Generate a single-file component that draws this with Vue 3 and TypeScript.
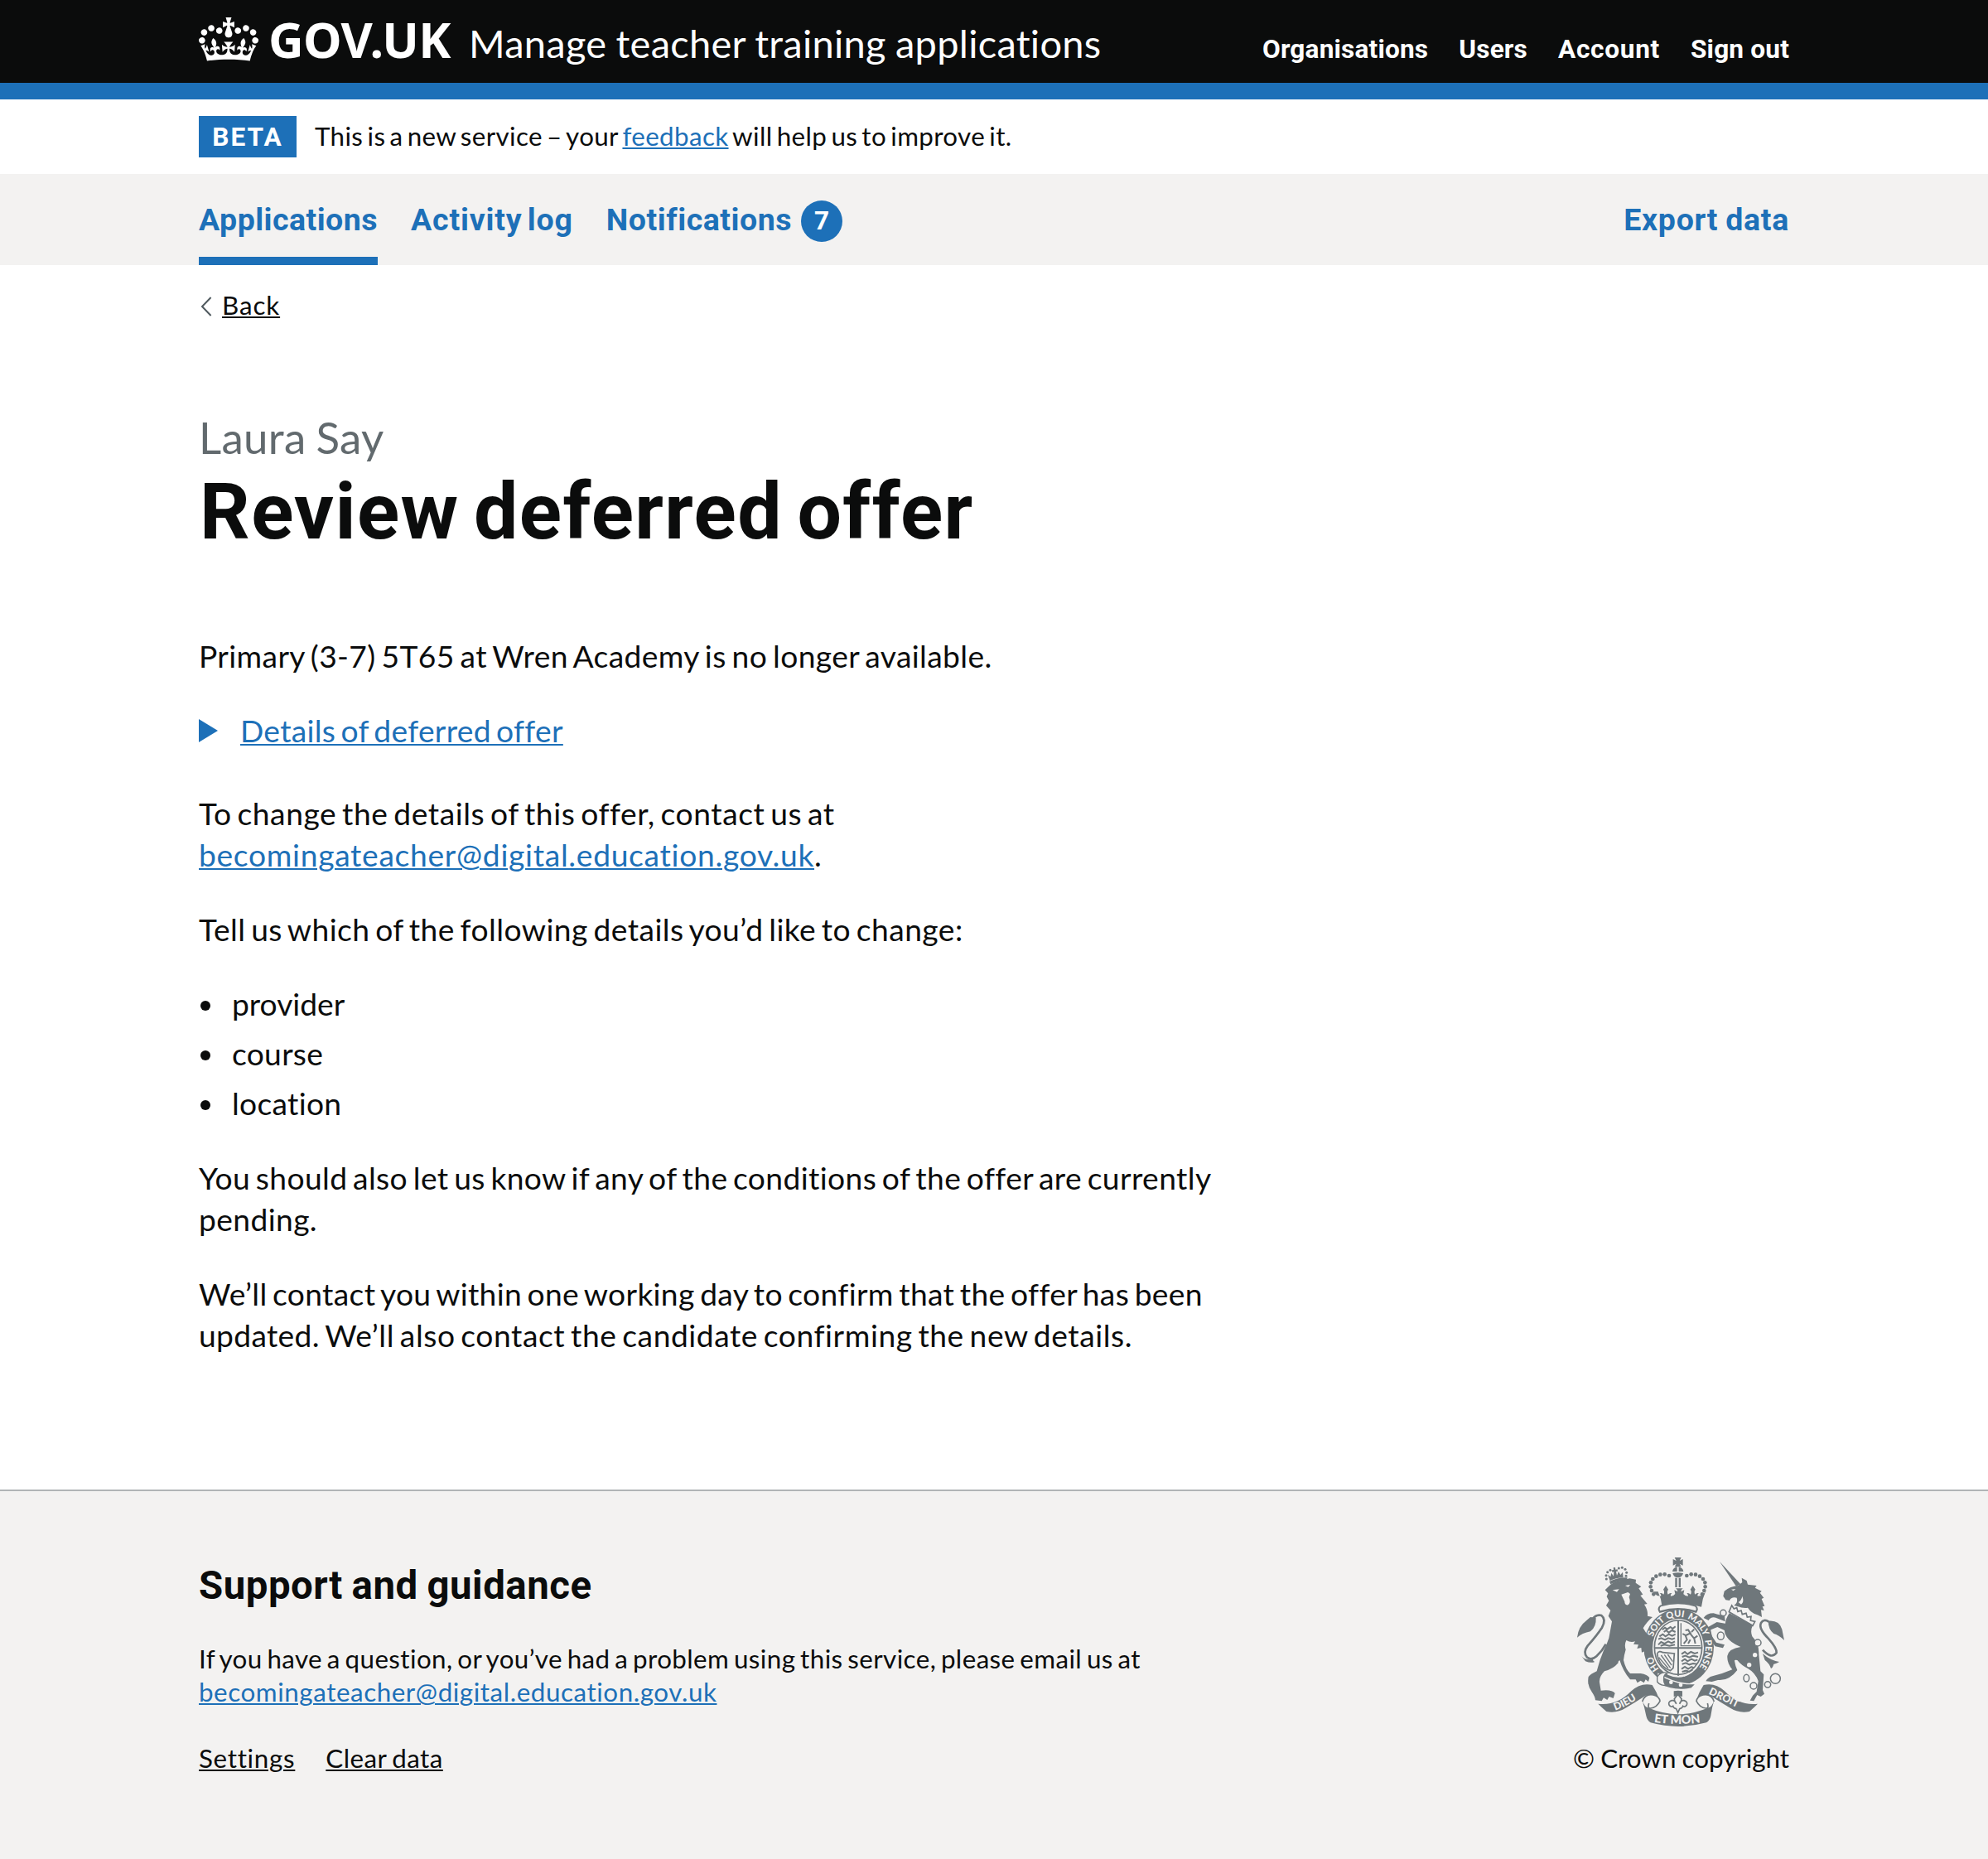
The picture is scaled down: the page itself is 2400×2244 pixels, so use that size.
<script setup lang="ts">
import { ref } from 'vue'

interface NavItem {
  label: string
  key: string
  current?: boolean
  count?: number
}

interface Pearl {
  x: number
  y: number
}

const accountLinks = ref<NavItem[]>([
  { label: 'Organisations', key: 'link-organisations' },
  { label: 'Users', key: 'link-users' },
  { label: 'Account', key: 'link-account' },
  { label: 'Sign out', key: 'link-signout' },
])

const sections = ref<NavItem[]>([
  { label: 'Applications', key: 'applications', current: true },
  { label: 'Activity log', key: 'activity' },
  { label: 'Notifications', key: 'notifications', count: 7 },
])

const changeable = ['provider', 'course', 'location']
const supportEmail = 'becomingateacher@digital.education.gov.uk'

// Pearls on the left arch of the royal crown; the right arch mirrors them.
const leftPearls: Pearl[] = [
  { x: 405, y: 126 }, { x: 389, y: 121 }, { x: 373, y: 122 }, { x: 358, y: 128 },
  { x: 346, y: 138 }, { x: 339, y: 151 }, { x: 338, y: 166 }, { x: 342, y: 180 }, { x: 349, y: 193 },
]
const pearls: Pearl[] = [...leftPearls, ...leftPearls.map(p => ({ x: 874 - p.x, y: p.y }))]
const lionPearls: Pearl[] = [
  { x: 178, y: 138 }, { x: 177, y: 125 }, { x: 182, y: 113 }, { x: 192, y: 106 },
  { x: 223, y: 99 }, { x: 235, y: 97 }, { x: 246, y: 103 }, { x: 251, y: 115 }, { x: 249, y: 127 },
]
</script>

<template>
  <div class="page">
    <header class="header">
      <div class="wrap header-row">
        <a class="logo" href="#">
          <svg class="crown" viewBox="0 0 132 97" aria-hidden="true">
            <path fill="currentColor" fill-rule="evenodd" d="M25 30.2c3.5 1.5 7.7-.2 9.1-3.7 1.5-3.6-.2-7.8-3.9-9.2-3.6-1.4-7.6.3-9.1 3.9-1.4 3.5.3 7.5 3.9 9zM9 39.5c3.6 1.5 7.8-.2 9.2-3.7 1.5-3.6-.2-7.8-3.9-9.1-3.6-1.5-7.6.2-9.1 3.8-1.4 3.5.3 7.5 3.8 9zM4.4 57.2c3.5 1.5 7.7-.2 9.1-3.8 1.5-3.6-.2-7.7-3.9-9.1-3.5-1.5-7.6.3-9.1 3.8-1.4 3.5.3 7.6 3.9 9.1zm38.3-21.4c3.5 1.5 7.7-.2 9.1-3.8 1.5-3.6-.2-7.7-3.9-9.1-3.6-1.5-7.6.3-9.1 3.8-1.3 3.6.4 7.7 3.9 9.1zm64.4-5.6c-3.6 1.5-7.8-.2-9.1-3.7-1.5-3.6.2-7.8 3.8-9.2 3.6-1.4 7.7.3 9.2 3.9 1.3 3.5-.4 7.5-3.9 9zm15.9 9.3c-3.6 1.5-7.7-.2-9.1-3.7-1.5-3.6.2-7.8 3.7-9.1 3.6-1.5 7.7.2 9.2 3.8 1.5 3.5-.3 7.5-3.8 9zm4.7 17.7c-3.6 1.5-7.8-.2-9.2-3.8-1.5-3.6.2-7.7 3.9-9.1 3.6-1.5 7.7.3 9.2 3.8 1.3 3.5-.4 7.6-3.9 9.1zM89.3 35.8c-3.6 1.5-7.8-.2-9.2-3.8-1.4-3.6.2-7.7 3.9-9.1 3.6-1.5 7.7.3 9.2 3.8 1.4 3.6-.3 7.7-3.9 9.1zM69.7 17.7l8.9 4.7V9.3l-8.9 2.8c-.2-.3-.5-.6-.9-.9L72.4 0H59.6l3.5 11.2c-.3.3-.6.5-.9.9l-8.8-2.8v13.1l8.8-4.7c.3.3.6.7.9.9l-5 15.4v.1c-.2.8-.4 1.6-.4 2.4 0 4.1 3.1 7.5 7 8.1h.2c.3 0 .7.1 1 .1.4 0 .7 0 1-.1h.2c4-.6 7.1-4.1 7.1-8.1 0-.8-.1-1.7-.4-2.4V34l-5.1-15.4c.4-.2.7-.6 1-.9zM66 92.8c16.9 0 32.8 1.1 47.1 3.2 4-16.9 8.9-26.7 14-33.5l-9.6-3.4c1 4.9 1.1 7.2 0 10.2-1.5-1.4-3-4.3-4.2-8.7L108.6 76c2.8-2 5-3.2 7.5-3.3-4.4 9.4-10 11.9-13.6 11.2-4.3-.8-6.3-4.6-5.6-7.9 1-4.7 5.7-5.9 8-.5 4.3-8.7-3-11.4-7.6-8.8 7.1-7.2 7.9-13.5 2.1-21.1-8 6.1-8.1 12.3-4.5 20.8-4.7-5.4-12.1-2.5-9.5 6.2 3.4-5.2 7.9-2 7.2 3.1-.6 4.3-6.4 7.8-13.5 7.2-10.3-.9-10.9-8-11.2-13.8 2.5-.5 7.1 1.8 11 7.3L80.2 60c-4.1 4.4-8 5.3-12.3 5.4 1.4-4.4 8-11.6 8-11.6H55.5s6.4 7.2 7.9 11.6c-4.2-.1-8-1-12.3-5.4l1.4 16.4c3.9-5.5 8.5-7.7 10.9-7.3-.3 5.8-.9 12.8-11.1 13.8-7.2.6-12.9-2.9-13.5-7.2-.7-5 3.8-8.3 7.1-3.1 2.7-8.7-4.6-11.6-9.4-6.2 3.7-8.5 3.6-14.7-4.6-20.8-5.8 7.6-5 13.9 2.2 21.1-4.7-2.6-11.9.1-7.7 8.8 2.3-5.5 7.1-4.2 8.1.5.7 3.3-1.3 7.1-5.7 7.9-3.5.7-9-1.8-13.5-11.2 2.5.1 4.7 1.3 7.5 3.3l-4.7-15.4c-1.2 4.4-2.7 7.2-4.3 8.7-1.1-3-.9-5.3 0-10.2l-9.5 3.4c5 6.9 9.9 16.7 14 33.5 14.8-2.1 30.8-3.2 47.7-3.2z" />
          </svg>
          <span class="logotype">GOV.UK</span>
        </a>
        <a class="service" href="#">Manage teacher training applications</a>
        <nav class="account">
          <a v-for="link in accountLinks" :key="link.key" :class="link.key" href="#">{{ link.label }}</a>
        </nav>
      </div>
    </header>

    <div class="wrap phase">
      <strong class="tag">BETA</strong>
      <span class="phase-text">This is a new service – your <a class="link" href="#">feedback</a> will help us to improve it.</span>
    </div>

    <nav class="primary">
      <div class="wrap primary-row">
        <a
          v-for="item in sections"
          :key="item.key"
          :class="['tab', item.key, { current: item.current }]"
          href="#"
        >{{ item.label }}<span v-if="item.count" class="badge">{{ item.count }}</span></a>
        <a class="tab export" href="#">Export data</a>
      </div>
    </nav>

    <div class="wrap body">
      <a class="back" href="#">
        <svg class="chevron" viewBox="0 0 14 24" aria-hidden="true">
          <path d="M12.6 1 2 12l10.600 11" fill="none" stroke="#505a5f" stroke-width="2" />
        </svg>
        <span class="back-text">Back</span>
      </a>

      <main class="main">
        <div class="caption">Laura Say</div>
        <h1 class="title">Review deferred offer</h1>

        <p class="intro">Primary (3-7) 5T65 at Wren Academy is no longer available.</p>

        <div class="details">
          <svg class="arrow" viewBox="0 0 23 28" aria-hidden="true"><path d="M0 0 23 14 0 28z" fill="#1d70b8" /></svg>
          <a class="link details-text" href="#">Details of deferred offer</a>
        </div>

        <p class="contact">To change the details of this offer, contact us at <a class="link email" href="#">{{ supportEmail }}</a>.</p>
        <p class="prompt">Tell us which of the following details you’d like to change:</p>

        <ul class="list">
          <li v-for="entry in changeable" :key="entry">{{ entry }}</li>
        </ul>

        <p>You should also let us know if any of the conditions of the offer are currently pending.</p>
        <p class="outcome">We’ll contact you within one working day to confirm that the offer has been updated. <span class="candidate">We’ll also contact the candidate confirming the new details.</span></p>
      </main>
    </div>

    <footer class="footer">
      <div class="wrap footer-row">
        <div class="support">
          <h2>Support and guidance</h2>
          <p class="question">If you have a question, or you’ve had a problem using this service, please email us at<br><a class="link footer-email" href="#">{{ supportEmail }}</a></p>
          <div class="footer-links">
            <a class="settings" href="#">Settings</a>
            <a class="clear" href="#">Clear data</a>
          </div>
        </div>
        <div class="crown-copyright">
          <svg class="crest" viewBox="72 60 750 612" aria-hidden="true">
            <defs>
              <path id="garter-arc" d="M370 465 A98 111 0 1 1 508 465" />
              <path id="dieu-arc" d="M210 614 Q268 594 324 545" />
              <path id="droit-arc" d="M547 554 Q602 580 676 615" />
              <path id="mon-arc" d="M350 656 Q437 670 528 656" />
            </defs>

            <g fill="#6f777b">
              <!-- royal crown -->
              <path d="M425 60h24l-6 12 12-6v23l-12-6 6 11h-24l6-11-12 6v-23l12 6z" />
              <path d="M434 94v17h-17q2-14 17-17zM440 94v17h17q-2-14-17-17z" />
              <path d="M418 117q19-5 38 0-4 16-19 16t-19-16z" />
              <circle v-for="(p, i) in pearls" :key="i" :cx="p.x" :cy="p.y" r="7" />
              <path d="M427 134h7v34h-7zM440 134h7v34h-7z" />
              <path d="M347 184l14 14 14 2q3-6-4-10 8-4 14 4 5-10-1-18l9-14 9 14q-6 8-1 18 8-8 14-4-6 5-4 10 11 0 16-8l-3-14 12 6q0-7-7-12h26q-7 5-7 12l12-6-3 14q5 8 16 8 2-5-4-10 6-4 14 4 5-10-1-18l9-14 9 14q-6 8-1 18 6-8 14-4-7 4-4 10l14-2 14-14q-12 26-15 55-70-22-142 0-3-29-15-55z" />
              <path d="M372 233q65-20 130 0 14 12 2 28-67-22-134 0-12-16 2-28z" />
              <path d="M376 238q61-18 122 0 8 6 3 15-64-20-128 0-5-9 3-15z" fill="#f3f2f1" />

              <!-- lion -->
              <path d="M189 147q30-16 65-14l-3 11q-30 0-58 13z" />
              <circle v-for="(p, i) in lionPearls" :key="i" :cx="p.x" :cy="p.y" r="4.500" />
              <path d="M190 142l-7-20 10 8 3-14 8 12 1-16-6 1-1-7 6-1-1-8 7-1 1 8 7-1 1 7-6 1 3 14 6-14 7 12 8-10 2 20q-26 0-49 12z" />
              <path d="M173 178 186 165q14-16 44-21l32-8 23 4-1 12 20 14-9 6 15 22-9 4 25 30-11 2q14 20 12 42l18 4q-22 18-34 40 12 20 24 38l14 24 2 24-9 8-8-8-10 14-8-16-10 4-2-17-15 3 5-14-18-2 6-10q-16 6-32-4-8 16-2 34-6 20-8 38 8 34 24 48l38 0q25 4 32 16l-4 14-10-8-6 12-12-8-12 8-6-12-20 0q-26-30-38-70-7 5-5 10-18 22-50 30-20 20-18 40l5 30q40-5 51 10l-6 18-15-6-7 12-13-8-7 12-23-3q-1-13-13-30-18-25-12-55 8-10 30-20 10-40 25-75 13-25 19-45l11-60-13-20 8-20-16-18 10-17-8-15 5-12z" />
              <path d="M200 178l24-3-8 10zM246 162l18-3-7 8zM232 194l24-8 8 6-4 12q8 20-4 28-12 2-12-12z" fill="#f3f2f1" />
              <path d="M72 350q4-40 34-62l14-12 20 2q2 32-20 50-30 6-48 22zM88 418q14 16 42 10-4 4 6 10-14 6-34-2z" />
              <path d="M126 286q14-22 34-16 18 14 2 44-20 30-52 66-18 24-2 42 16 12 34-4 20-18 34-44" fill="none" stroke="#6f777b" stroke-width="8" />

              <!-- unicorn -->
              <path d="M588 75l76 82-16 8z" />
              <path d="M601 200l4-18q22-18 50-20l15-12-2-16 18 10 4 14 32 4-6 8 24 12-6 6 14 18-8 4 11 26-8 2 6 14-11-2 3 26-16-8q-24-8-35-26-14 4-40-6l-10-2q16-12 10-28-20-4-26 10l-14-2z" />
              <path d="M630 176l16-2-8 7zM656 222q12-8 14-22 8 20-4 30z" fill="#f3f2f1" />
              <path d="M632 234l8 12 10-4 4 14 12-4 4 14 14-4 4 14 14-2-2 14 16 4-8 15-86-50z" fill="#f3f2f1" stroke="#6f777b" stroke-width="5" />
              <path d="M624 262l84 44q-10 20-2 40 26 27 24 64l6 62 12 12-4 56 6 14-13 10-13-6-12 22-14-2 10-18 14-14 6-38q-10-30-38-46-24-12-38-30-10-2-10 2 3 20 10 34-30 40-70 36l-22 6-22-2q8-14 24-18 40-10 72-24-20-24-18-50 6-26 48-32-38-16-50-36-14-20-5-40-4-20 18-52z" />
              <path d="M614 328l-34-16-24 10 2 20 18 26 30 8-6 12-28-6-26-34-6-32 38-22 34 6zM608 292l-34-14q-18-4-26 10l-18-9q10-17 36-17 26 8 40 8z" />
              <path d="M744 395q32 35 50 10 2-16-30-52-36-36-26-56 10-16 28-4" fill="none" stroke="#6f777b" stroke-width="8" />
              <path d="M764 290q40-4 50 30l8 40q-20-20-38-24-20-16-20-46zM744 408q26 24 60 30-14 8-20 8-4 14-10 16-6-18-22-30z" />
              <g fill="none" stroke="#6f777b" stroke-width="4.500">
                <circle cx="601" cy="261" r="11" />
                <ellipse cx="592" cy="344" rx="12" ry="14" fill="#f3f2f1" />
                <circle cx="726" cy="369" r="12" fill="#f3f2f1" />
                <ellipse cx="685" cy="497" rx="10" ry="13" />
                <circle cx="711" cy="525" r="12" />
                <circle cx="762" cy="520" r="11" />
                <circle cx="790" cy="499" r="18" />
              </g>
              <circle cx="716" cy="413" r="8" fill="#f3f2f1" />
              <circle cx="695" cy="449" r="8" fill="#f3f2f1" />

              <!-- garter and shield -->
              <ellipse cx="440" cy="385" rx="127" ry="138" />
              <ellipse cx="438" cy="388" rx="93" ry="106" fill="#f3f2f1" />
              <ellipse cx="438" cy="386" rx="86" ry="98" fill="none" stroke="#6f777b" stroke-width="5" />
              <path d="M438 288v200M352 388h172" stroke="#6f777b" stroke-width="6" />
              <path d="M366 482q74 44 138 34l-18 18q-62 14-118-16z" stroke="#f3f2f1" stroke-width="4" />
              <circle cx="412" cy="512" r="7" fill="#f3f2f1" />
              <circle cx="447" cy="522" r="7" fill="#f3f2f1" />
              <path d="M362 492q14-20 38-14-16 6-14 22-2 14 8 24-22 0-32-14z" fill="#f3f2f1" stroke="#6f777b" stroke-width="4" />
              <g fill="none" stroke="#6f777b" stroke-width="6">
                <path d="M380 322l10-8 8 6 12-8 8 6 10-8M386 330l8-6 10 8 12-8 12 6M370 346l12-8 10 8 12-8 12 6 12-6M366 356l10-4 14 6 12-6 14 4 10-4M366 376l10-10 12 6 14-8 12 6 12-6M374 380l14-4 18 4 20-4" />
                <path d="M450 410l12-8 10 8 12-8 14 6 12-4M452 420l12-4 14 6 14-6 18 4M450 436l12-8 10 8 14-8 12 6 10-4M452 446l14-4 12 6 14-4 14 2M450 464l12-8 12 8 12-8 10 4M452 474l14-4 12 4 12-8" />
                <path d="M458 372l12-14-6-16-10-6M466 342l16-8-8-12-10 2M480 334l16 20 4 18M482 358l-8 14M496 352l12-8M486 330l10-10" />
              </g>
              <path d="M448 298v82h70" fill="none" stroke="#6f777b" stroke-width="4" />
              <path d="M362 408q6-12 20-4l42 4-4 52-10 10q-34-10-46-50z" fill="none" stroke="#6f777b" stroke-width="5" />
              <path d="M376 414l34 46M388 412l26 38M400 411l18 26M368 422l34 40" stroke="#6f777b" stroke-width="4" />

              <!-- ribbons -->
              <path d="M148 590q68 8 120-46 34-32 76-22 16 24 26 54-24-20-50-16-34 22-70 44-34 22-72 14-16-14-30-28z" />
              <path d="M726 590q-68 8-120-46-34-32-76-22-16 24-26 54 24-20 50-16 34 22 70 44 34 22 72 14 16-14 30-28z" />
              <path d="M308 582q10-30 40-24 22 6 24 22-12 24-34 26-12 2-6-18 M568 582q-10-30-40-24-22 6-24 22 12 24 34 26 12 2 6-18" fill="#f3f2f1" stroke="#6f777b" stroke-width="5" />
              <path d="M308 578q8 22 20 26 56 24 110 24t110-24q12-4 20-26-8 24-12 56-4 18-16 24-102 28-202 0-12-6-16-24-6-32-14-56z" />

              <!-- fleur-de-lis -->
              <path d="M422 544q16-3 31 0v20q-16-4-31 0z" />
              <path d="M437 556l13 16q0 10-7 18 4-14 16-12 14 4 10 16-6 10-14 4-2 8-12 10l-6 14-6-14q-10-2-12-10-8 6-14-4-4-12 10-16 12-2 16 12-7-8-7-18z" fill="#f3f2f1" stroke="#6f777b" stroke-width="5" />
            </g>

            <g class="motto">
              <text><textPath href="#garter-arc" startOffset="2">HO</textPath></text>
              <text><textPath href="#garter-arc" startOffset="124">SOIT</textPath></text>
              <text><textPath href="#garter-arc" startOffset="208">QUI</textPath></text>
              <text><textPath href="#garter-arc" startOffset="282">MALY</textPath></text>
              <text><textPath href="#garter-arc" startOffset="388">PENSE</textPath></text>
            </g>
            <g class="motto scroll">
              <text><textPath href="#dieu-arc">DIEU</textPath></text>
              <text><textPath href="#droit-arc">DROIT</textPath></text>
              <text class="mon"><textPath href="#mon-arc">ET MON</textPath></text>
            </g>
          </svg>
          <a class="copyright" href="#">© Crown copyright</a>
        </div>
      </div>
    </footer>
  </div>
</template>

<style>
body {
  margin: 0;
  background: #fff;
}
</style>

<style scoped>
.page {
  min-height: 2244px;
  display: flex;
  flex-direction: column;
  color: #0b0c0c;
  font-family: Lato, "Noto Sans", sans-serif;
  font-size: 37.2px;
  line-height: 50px;
  letter-spacing: 0.4px;
  word-spacing: -3.3px;
  font-variant-ligatures: none;
}
a {
  color: inherit;
  text-decoration: none;
}
.wrap {
  width: 1920px;
  margin: 0 auto;
}
.link,
.back-text,
.footer-links a {
  text-decoration: underline;
  text-decoration-thickness: 2px;
  text-underline-offset: 2px;
}
.link {
  color: #1d70b8;
}

.header {
  height: 100px;
  background: #0b0c0c;
  border-bottom: 20px solid #1d70b8;
  color: #fff;
}
.header-row {
  display: flex;
  align-items: flex-start;
}
.logo {
  display: flex;
  width: 326px;
}
.crown {
  width: 72px;
  height: 53px;
  margin-top: 21px;
}
.logotype {
  margin: 17px 0 0 12px;
  font: 700 59px/60px "Noto Sans", sans-serif;
  letter-spacing: -0.6px;
}
.service {
  margin-top: 27px;
  font-size: 47px;
  letter-spacing: 0.26px;
  word-spacing: -1px;
}
.account {
  display: flex;
  gap: 37px;
  margin: 40px 0 0 auto;
  font: 700 31.6px/40px Roboto, sans-serif;
  letter-spacing: 0.17px;
  word-spacing: 0;
}
.link-account {
  letter-spacing: 0.7px;
}

.phase {
  display: flex;
  height: 90px;
  font-size: 31.35px;
  line-height: 40px;
}
.tag {
  box-sizing: border-box;
  width: 118px;
  height: 50px;
  margin: 20px 22px 0 0;
  padding-top: 1px;
  background: #1d70b8;
  color: #fff;
  font: 700 31.6px/50px Roboto, sans-serif;
  letter-spacing: 2px;
  text-align: center;
}
.phase-text {
  margin-top: 24px;
  letter-spacing: 0.37px;
  word-spacing: -3.2px;
}

.primary {
  height: 110px;
  background: #f3f2f1;
}
.primary-row {
  display: flex;
  height: 100%;
  gap: 40px;
}
.tab {
  box-sizing: border-box;
  height: 110px;
  padding-top: 30px;
  color: #1d70b8;
  font: 700 37.5px/50px Roboto, sans-serif;
  letter-spacing: 0.54px;
  word-spacing: 0;
  display: flex;
}
.activity {
  letter-spacing: 0.85px;
  word-spacing: -4px;
}
.current {
  border-bottom: 10px solid #1d70b8;
  letter-spacing: 0.47px;
}
.export {
  margin-left: auto;
  letter-spacing: 0.7px;
  word-spacing: -1px;
}
.badge {
  width: 50px;
  height: 50px;
  margin: 2px 0 0 11px;
  border-radius: 50%;
  background: #1d70b8;
  color: #fff;
  font-size: 31.6px;
  letter-spacing: 0;
  text-align: center;
}

.body {
  flex: 1;
}
.back {
  display: flex;
  width: max-content;
  height: 40px;
  margin-top: 28px;
  font-size: 31.35px;
  line-height: 40px;
}
.back-text {
  letter-spacing: 0.9px;
}
.chevron {
  width: 14px;
  height: 24px;
  margin: 10px 12px 0 2px;
}
.main {
  width: 1280px;
  padding-top: 110px;
}
.caption {
  color: #626a6e;
  font-size: 52.9px;
  line-height: 60px;
  letter-spacing: 0.3px;
  word-spacing: -2px;
}
.title {
  margin: 10px 0 99px 1px;
  font: 700 94.8px/100px Roboto, sans-serif;
  letter-spacing: 1.4px;
  word-spacing: -7.5px;
}
p {
  margin: 0 0 40px;
}
.intro {
  letter-spacing: 0.38px;
  word-spacing: -3px;
}
.contact,
.candidate {
  letter-spacing: 0.57px;
}
.prompt {
  letter-spacing: 0.46px;
}
.outcome {
  letter-spacing: 0.33px;
}
.details {
  display: flex;
  margin-bottom: 50px;
}
.arrow {
  width: 23px;
  height: 28px;
  margin: 11px 27px 0 0;
}
.details-text {
  letter-spacing: 0.3px;
  word-spacing: -3.6px;
}
.email {
  letter-spacing: 0.7px;
}
.list {
  margin: 0 0 40px;
  padding: 0;
  list-style: none;
}
.list li {
  display: flex;
  align-items: center;
  margin-bottom: 10px;
  letter-spacing: 0.3px;
}
.list li:first-child {
  letter-spacing: 0;
}
.list li:last-child {
  margin-bottom: 0;
}
.list li::before {
  content: "";
  width: 12px;
  height: 12px;
  margin: 4px 26px 0 2px;
  border-radius: 50%;
  background: #0b0c0c;
}

.footer {
  height: 444px;
  border-top: 2px solid #b1b4b6;
  background: #f3f2f1;
  font-size: 31.35px;
  line-height: 40px;
}
.footer-row {
  display: flex;
  justify-content: space-between;
}
h2 {
  margin: 89px 0 43px;
  font: 700 47.4px/50px Roboto, sans-serif;
  letter-spacing: 0.5px;
  word-spacing: -1.5px;
}
.question {
  letter-spacing: 0.41px;
  word-spacing: -2.7px;
}
.footer-email {
  letter-spacing: 0.57px;
}
.footer-links {
  display: flex;
  gap: 37px;
}
.settings {
  letter-spacing: 0.7px;
}
.clear {
  letter-spacing: 0.45px;
  word-spacing: -2px;
}
.crown-copyright {
  display: flex;
  flex-direction: column;
  align-items: flex-end;
}
.copyright {
  letter-spacing: 0;
  word-spacing: -1px;
}
.crest {
  width: 250px;
  height: 204px;
  margin: 80px 6px 18px 0;
}
.motto {
  fill: #f3f2f1;
  font: 900 33px Lato, sans-serif;
  letter-spacing: 0;
  word-spacing: 0;
}
.scroll {
  font-size: 37px;
}
.mon {
  font-size: 43px;
}
</style>
